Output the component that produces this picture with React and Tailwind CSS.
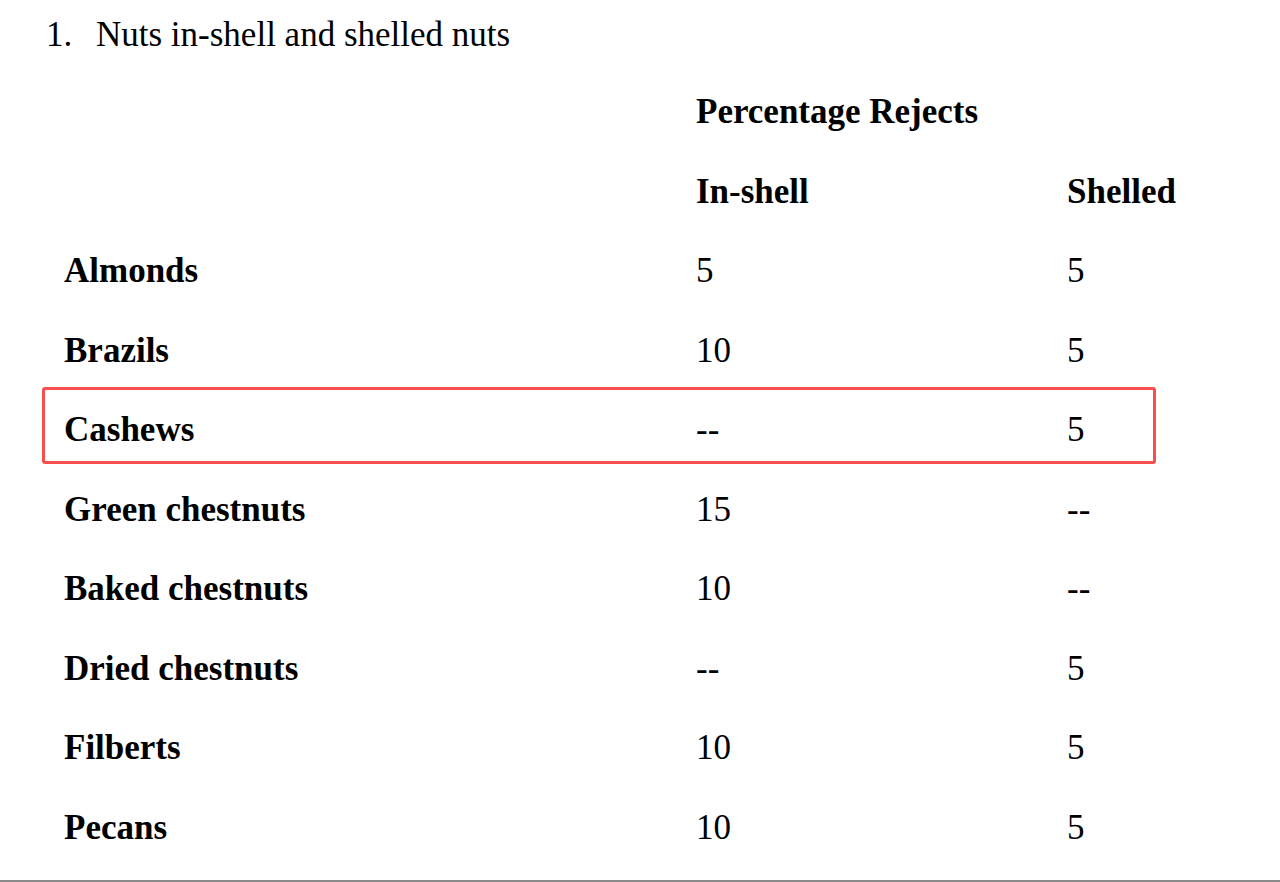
const rows = [
  { name: "Almonds", inShell: "5", shelled: "5" },
  { name: "Brazils", inShell: "10", shelled: "5" },
  { name: "Cashews", inShell: "--", shelled: "5", marked: true },
  { name: "Green chestnuts", inShell: "15", shelled: "--" },
  { name: "Baked chestnuts", inShell: "10", shelled: "--" },
  { name: "Dried chestnuts", inShell: "--", shelled: "5" },
  { name: "Filberts", inShell: "10", shelled: "5" },
  { name: "Pecans", inShell: "10", shelled: "5" },
];

function Row({ children, marked }) {
  // the marked row is drawn 1px higher and a bit shorter, text stays on the same line
  return (
    <div
      className={
        "grid grid-cols-[632px_371px_1fr] items-center pl-[22px] w-[1114px] " +
        (marked
          ? "h-[77px] -mt-px mb-[3.5px] pt-[8.5px] leading-[68.5px] ring-[3px] ring-inset ring-[#f94f4f] rounded-[3px]"
          : "h-[79.5px] pt-[4px] leading-[75.5px]")
      }
    >
      {children}
    </div>
  );
}

export default function App() {
  return (
    <div
      className="h-[882px] overflow-hidden bg-white border-b-2 border-[#8a8a8a] text-black text-[35px]"
      style={{ fontFamily: '"Liberation Serif", "Times New Roman", serif' }}
    >
      <div className="h-[70px] pt-[15px] flex leading-[1.15]">
        <span className="pl-[46px] w-[96px]">1.</span>
        <span>Nuts in-shell and shelled nuts</span>
      </div>

      <div className="pl-[42px]">
        <Row>
          <span />
          <span className="font-bold col-span-2">Percentage Rejects</span>
        </Row>
        <Row>
          <span />
          <span className="font-bold">In-shell</span>
          <span className="font-bold">Shelled</span>
        </Row>
        {rows.map((r) => (
          <Row key={r.name} marked={r.marked}>
            <span className="font-bold">{r.name}</span>
            <span>{r.inShell}</span>
            <span>{r.shelled}</span>
          </Row>
        ))}
      </div>
    </div>
  );
}
